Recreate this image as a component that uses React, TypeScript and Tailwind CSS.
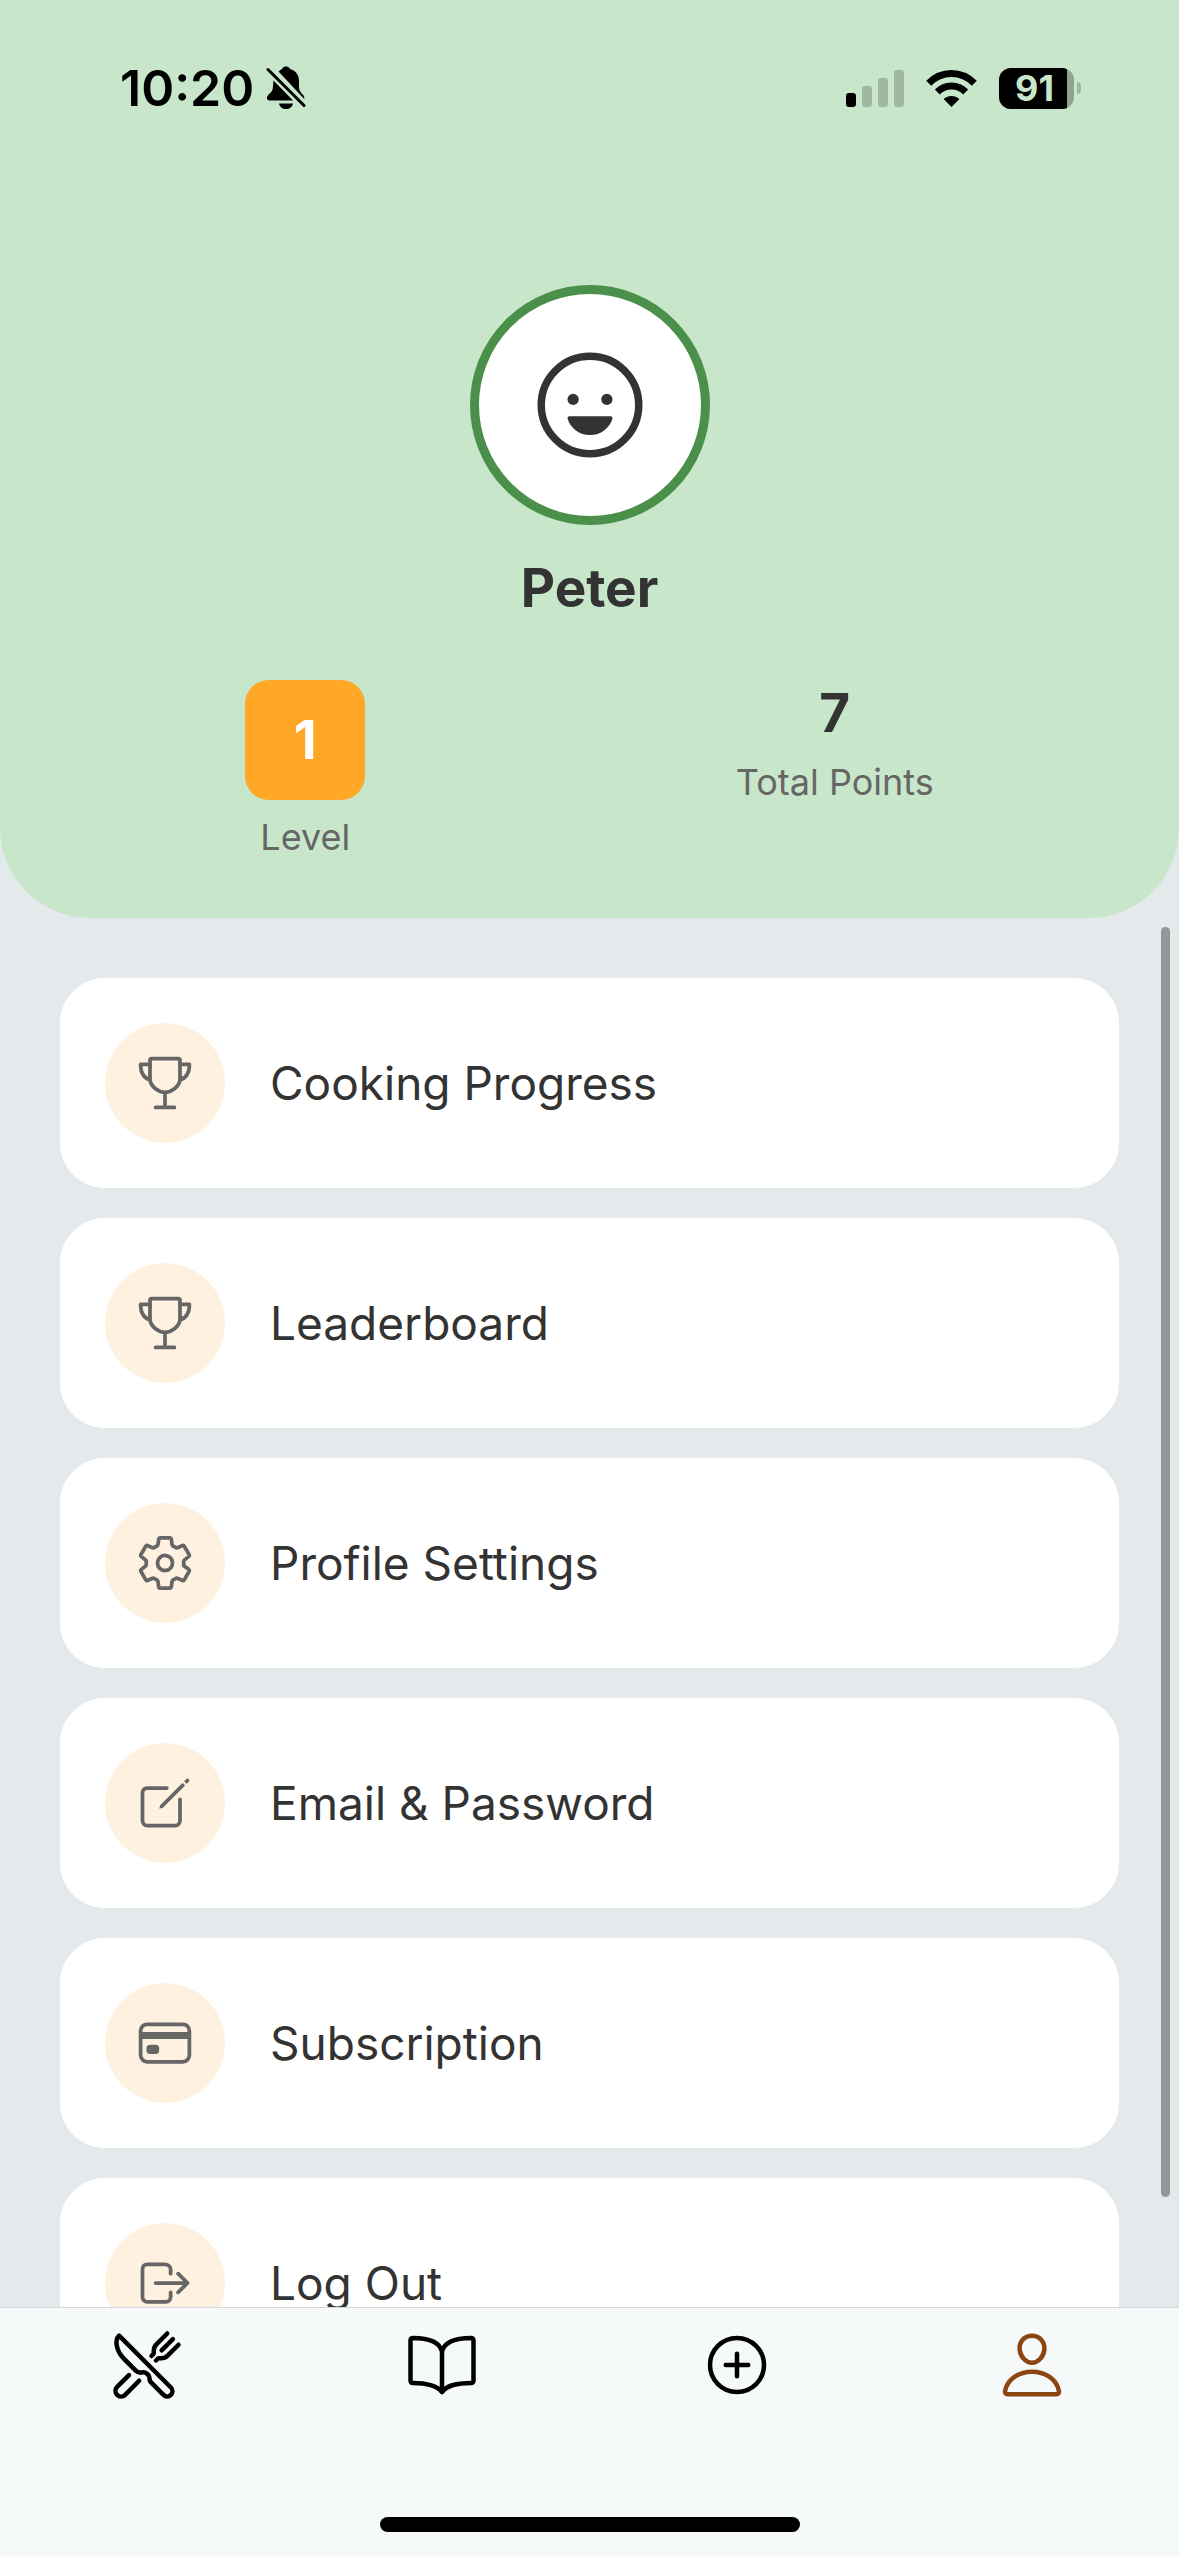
import { useState } from "react";
import type { IconType } from "react-icons";
import {
  IoAddCircleOutline,
  IoBookOutline,
  IoCardOutline,
  IoCreateOutline,
  IoHappyOutline,
  IoLogOutOutline,
  IoPersonOutline,
  IoRestaurantOutline,
  IoSettingsOutline,
  IoTrophyOutline,
} from "react-icons/io5";
import clsx from "clsx";

interface MenuItem {
  label: string;
  icon: IconType;
}

const menuItems: MenuItem[] = [
  { label: "Cooking Progress", icon: IoTrophyOutline },
  { label: "Leaderboard", icon: IoTrophyOutline },
  { label: "Profile Settings", icon: IoSettingsOutline },
  { label: "Email & Password", icon: IoCreateOutline },
  { label: "Subscription", icon: IoCardOutline },
  { label: "Log Out", icon: IoLogOutOutline },
];

const tabs = [
  { id: "recipes", icon: IoRestaurantOutline },
  { id: "cookbook", icon: IoBookOutline },
  { id: "add", icon: IoAddCircleOutline },
  { id: "profile", icon: IoPersonOutline },
];

function BellOffIcon() {
  return (
    <svg className="w-10 h-11" viewBox="0 0 40 44" fill="currentColor">
      <path d="M12.5 5.5C14 4.200 15.200 3.700 16 3C17 1 18.500 .5 20 .5S23 1 24 3C30 4.500 33 9.500 33 15V21C33 25 35.500 27 37.500 29.500C38.200 30.600 38.500 31.800 38.200 33Z" />
      <path d="M7.500 14.500L27 34.500H3.500C.8 34.500 .2 31.500 1.800 29.500C4.500 26.500 7 25.500 7 20Z" />
      <path d="M13 37.500H27C26.500 41 23.500 43 20 43S13.500 41 13 37.500Z" />
      <path d="M2 3.500L38 39.500" stroke="currentColor" strokeWidth="3" strokeLinecap="round" />
    </svg>
  );
}

function SignalIcon() {
  return (
    <svg className="w-[58px] h-[37px]" viewBox="0 0 58 37" fill="currentColor">
      <rect x="0" y="23" width="10" height="14" rx="3" />
      <rect x="16" y="16" width="10" height="21" rx="3" opacity="0.2" />
      <rect x="32" y="8" width="10" height="29" rx="3" opacity="0.2" />
      <rect x="48" y="0" width="10" height="37" rx="3" opacity="0.2" />
    </svg>
  );
}

function WifiIcon() {
  return (
    <svg className="w-[51px] h-[37px]" viewBox="0 0 51 37" fill="none" stroke="currentColor">
      <path d="M2.700 13.300C15.500 .3 35.500 .3 48.300 13.300" strokeWidth="7" />
      <path d="M11.300 22C19.200 14.100 31.800 14.100 39.700 22" strokeWidth="7" />
      <path d="M25.500 37L17.600 29.100C22 24.900 29 24.900 33.400 29.100Z" fill="currentColor" stroke="none" />
    </svg>
  );
}

function Battery({ level }: { level: number }) {
  return (
    <div className="flex items-center gap-[3px]">
      <div className="relative flex items-center justify-center w-[75px] h-[41px] rounded-xl overflow-hidden bg-[#8fa390]">
        <div className="absolute inset-y-0 left-0 bg-black" style={{ width: `${level}%` }} />
        <span className="relative text-[36px] leading-none font-bold text-[#c8e6c9] pr-1">{level}</span>
      </div>
      <div className="w-1 h-3 rounded-r-full bg-[#9fb7a0]" />
    </div>
  );
}

function StatusBar() {
  return (
    <div className="flex items-center justify-between pl-[120px] pr-[98px] pt-[58px]">
      <div className="flex items-center gap-3">
        <span className="text-[50px] leading-[60px] font-semibold">10:20</span>
        <BellOffIcon />
      </div>
      <div className="flex items-center gap-[22px]">
        <SignalIcon />
        <WifiIcon />
        <Battery level={91} />
      </div>
    </div>
  );
}

function MenuRow({ label, icon: Icon }: MenuItem) {
  return (
    <li>
      <button
        type="button"
        className="flex items-center gap-[45px] w-full p-[45px] rounded-[45px] bg-white text-left"
      >
        <span className="flex items-center justify-center shrink-0 w-[120px] h-[120px] rounded-full bg-[#fff1df]">
          <Icon className="w-[60px] h-[60px] text-[#666666]" />
        </span>
        <span className="text-[46px] leading-[60px] text-[#333333]">{label}</span>
      </button>
    </li>
  );
}

export default function App() {
  const [activeTab, setActiveTab] = useState("profile");

  return (
    <div className="flex flex-col h-screen overflow-hidden bg-[#e4e9eb] font-[Inter,sans-serif] text-black">
      <header className="shrink-0 rounded-b-[90px] bg-[#c8e6c9] pb-[59px]">
        <StatusBar />
        <div className="flex flex-col items-center pt-[167px]">
          <div className="flex items-center justify-center w-[240px] h-[240px] rounded-full border-[9px] border-[#4a8f4a] bg-white">
            <IoHappyOutline className="w-[120px] h-[120px] text-[#333333]" />
          </div>
          <h1 className="mt-[30px] text-[53px] leading-[66px] font-bold text-[#333333]">Peter</h1>
        </div>
        <div className="flex items-start justify-around px-[60px] pt-[59px]">
          <div className="flex flex-col items-center">
            <div className="flex items-center justify-center w-[120px] h-[120px] rounded-3xl bg-[#ffa726] text-[53px] leading-[66px] font-bold text-white">
              1
            </div>
            <p className="mt-4 text-[36px] leading-[43px] text-[#666666]">Level</p>
          </div>
          <div className="flex flex-col items-center">
            <p className="text-[53px] leading-[66px] font-bold text-[#333333]">7</p>
            <p className="mt-[15px] text-[36px] leading-[43px] text-[#666666]">Total Points</p>
          </div>
        </div>
      </header>

      <main className="relative flex-1 min-h-0">
        <ul className="flex flex-col gap-[30px] h-full overflow-y-auto [scrollbar-width:none] p-[60px]">
          {menuItems.map((item) => (
            <MenuRow key={item.label} {...item} />
          ))}
        </ul>
        <div className="absolute right-[9px] top-[9px] bottom-[110px] w-[9px] rounded-full bg-[#939798]" />
      </main>

      <nav className="shrink-0 border-t border-[#d4d8d9] bg-[#f5f9fa]">
        <div className="flex pt-[21px]">
          {tabs.map(({ id, icon: Icon }) => (
            <button
              key={id}
              type="button"
              aria-label={id}
              className={clsx(
                "flex flex-1 justify-center",
                activeTab === id ? "text-[#8b4513]" : "text-black",
              )}
              onClick={() => setActiveTab(id)}
            >
              <Icon className="w-[72px] h-[72px]" />
            </button>
          ))}
        </div>
        <div className="mx-auto mt-[116px] mb-6 w-[420px] h-[15px] rounded-full bg-black" />
      </nav>
    </div>
  );
}
